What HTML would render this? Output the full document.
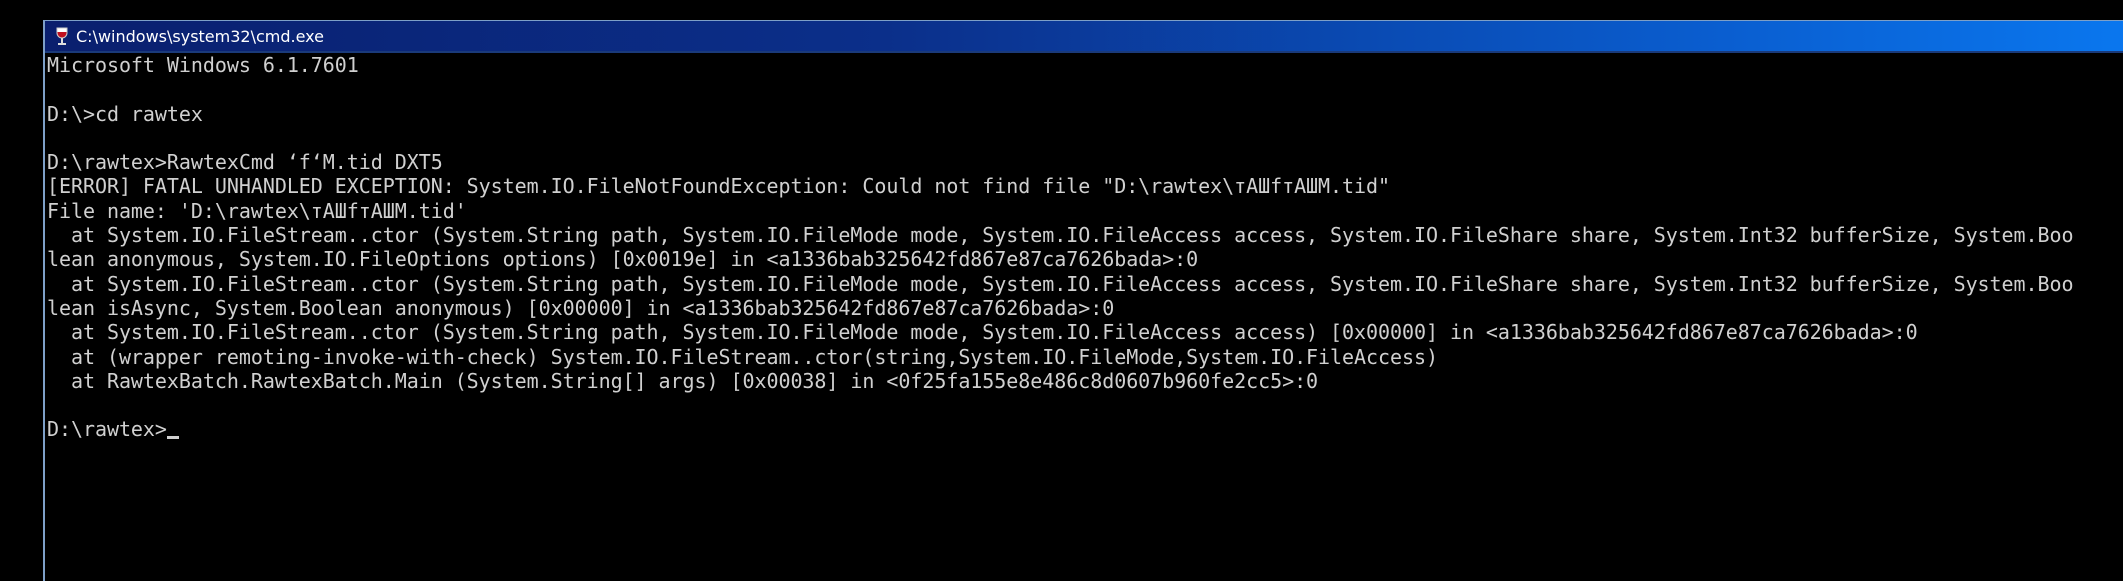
<!DOCTYPE html>
<html><head><meta charset="utf-8"><style>
html,body{margin:0;padding:0;background:#000;width:2123px;height:556px;overflow:hidden}
.win{position:absolute;left:43px;top:20px;width:2100px;height:560px;background:#000;border-left:2px solid #7ea0c8;border-top:1px solid #7ea0c8}
.title{position:absolute;left:0;top:0;width:100%;height:30px;background:linear-gradient(90deg,#0a1f6e 0%,#0b2f8a 40%,#0a5ed0 80%,#0a78f0 100%);border-bottom:2px solid #1a3a7a}
.title span{position:absolute;left:31px;top:6px;font:16px "DejaVu Sans","Liberation Sans",sans-serif;color:#fff}
.icon{position:absolute;left:10px;top:6px}
pre{position:absolute;left:2px;top:32px;margin:0;font:20px/24.3px "DejaVu Sans Mono","Liberation Mono",monospace;color:#d0d0d0;white-space:pre;letter-spacing:-0.05px}
.cur{display:inline-block;width:12px;height:3px;background:#d0d0d0;vertical-align:-3px}
</style></head><body>
<div class="win">
<div class="title"><svg class="icon" width="14" height="20" viewBox="0 0 14 20"><path d="M2 1h10v5a5 5 0 0 1-10 0z" fill="#fff" stroke="#ccc"/><path d="M2.5 5h9v1a4.5 4.5 0 0 1-9 0z" fill="#c01020"/><rect x="6" y="11" width="2" height="5" fill="#ddd"/><rect x="3" y="16" width="8" height="2" fill="#ddd"/></svg><span>C:\windows\system32\cmd.exe</span></div>
<pre>Microsoft Windows 6.1.7601

D:\&gt;cd rawtex

D:\rawtex&gt;RawtexCmd ‘f‘M.tid DXT5
[ERROR] FATAL UNHANDLED EXCEPTION: System.IO.FileNotFoundException: Could not find file "D:\rawtex\тАШfтАШM.tid"
File name: 'D:\rawtex\тАШfтАШM.tid'
  at System.IO.FileStream..ctor (System.String path, System.IO.FileMode mode, System.IO.FileAccess access, System.IO.FileShare share, System.Int32 bufferSize, System.Boo
lean anonymous, System.IO.FileOptions options) [0x0019e] in &lt;a1336bab325642fd867e87ca7626bada&gt;:0
  at System.IO.FileStream..ctor (System.String path, System.IO.FileMode mode, System.IO.FileAccess access, System.IO.FileShare share, System.Int32 bufferSize, System.Boo
lean isAsync, System.Boolean anonymous) [0x00000] in &lt;a1336bab325642fd867e87ca7626bada&gt;:0
  at System.IO.FileStream..ctor (System.String path, System.IO.FileMode mode, System.IO.FileAccess access) [0x00000] in &lt;a1336bab325642fd867e87ca7626bada&gt;:0
  at (wrapper remoting-invoke-with-check) System.IO.FileStream..ctor(string,System.IO.FileMode,System.IO.FileAccess)
  at RawtexBatch.RawtexBatch.Main (System.String[] args) [0x00038] in &lt;0f25fa155e8e486c8d0607b960fe2cc5&gt;:0

D:\rawtex&gt;<span class="cur"></span></pre>
</div>
</body></html>
